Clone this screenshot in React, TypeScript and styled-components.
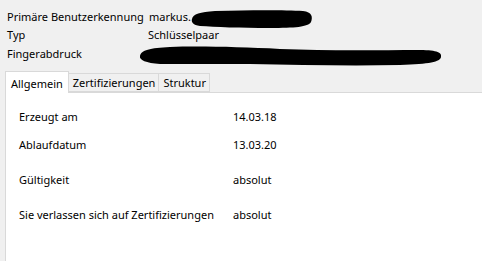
import React from 'react';
import styled, { createGlobalStyle } from 'styled-components';

const GlobalStyle = createGlobalStyle`
  html, body {
    margin: 0;
    padding: 0;
    background: #f0f0f0;
    font-family: 'Noto Sans', 'Open Sans', sans-serif;
    font-size: 11px;
    color: #000;
  }
`;

const Window = styled.div`
  width: 482px;
  height: 261px;
  display: flex;
  flex-direction: column;
  overflow: hidden;
  position: relative;
`;

const Header = styled.div`
  display: grid;
  grid-template-columns: 141px 1fr;
  grid-auto-rows: 18.5px;
  align-items: center;
  padding: 7px 0 0 7px;
`;

const Label = styled.div`
  white-space: nowrap;
`;

const Value = styled.div<{ $shift?: number }>`
  white-space: nowrap;
  padding-left: ${(p) => p.$shift ?? 0}px;
`;

const TabStrip = styled.div`
  display: flex;
  align-items: flex-end;
  margin-top: 8px;
  padding-left: 5px;
  height: 21px;
`;

const Tab = styled.div<{ $active?: boolean }>`
  box-sizing: border-box;
  height: ${(p) => (p.$active ? 22 : 19)}px;
  margin-bottom: ${(p) => (p.$active ? -1 : 0)}px;
  padding: ${(p) => (p.$active ? '2px 5px 0 5px' : '0 3px 0 4px')};
  display: flex;
  align-items: center;
  background: ${(p) => (p.$active ? '#fff' : '#f0f0f0')};
  border: 1px solid #d9d9d9;
  border-bottom: ${(p) => (p.$active ? 'none' : '1px solid #d9d9d9')};
  border-left: ${(p) => (p.$active ? '1px solid #d9d9d9' : 'none')};
  position: relative;
  z-index: ${(p) => (p.$active ? 1 : 0)};
  white-space: nowrap;
`;

const Panel = styled.div`
  flex: 1;
  margin-left: 5px;
  background: #fff;
  border-left: 1px solid #d9d9d9;
  border-top: 1px solid #d9d9d9;
  padding: 16px 0 0 13px;
`;

const Row = styled.div<{ $gap: number }>`
  display: grid;
  grid-template-columns: 214px 1fr;
  margin-top: ${(p) => p.$gap}px;
  line-height: 16px;
`;

const Redaction = styled.svg`
  position: absolute;
  left: 0;
  top: 0;
  pointer-events: none;
`;

const details = [
  { label: 'Erzeugt am', value: '14.03.18', gap: 0 },
  { label: 'Ablaufdatum', value: '13.03.20', gap: 12 },
  { label: 'Gültigkeit', value: 'absolut', gap: 19 },
  { label: 'Sie verlassen sich auf Zertifizierungen', value: 'absolut', gap: 19 },
];

export default function App() {
  return (
    <Window>
      <GlobalStyle />
      <Header>
        <Label>Primäre Benutzerkennung</Label>
        <Value $shift={1}>markus.</Value>
        <Label>Typ</Label>
        <Value>Schlüsselpaar</Value>
        <Label>Fingerabdruck</Label>
        <Value />
      </Header>
      <TabStrip>
        <Tab $active>Allgemein</Tab>
        <Tab>Zertifizierungen</Tab>
        <Tab>Struktur</Tab>
      </TabStrip>
      <Panel>
        {details.map((d) => (
          <Row key={d.label} $gap={d.gap}>
            <div>{d.label}</div>
            <div>{d.value}</div>
          </Row>
        ))}
      </Panel>
      <Redaction width="482" height="80" viewBox="0 0 482 80">
        <path
          d="M192 19 C193 14 200 12 215 11 C250 10 285 10 303 11 C312 12 313 17 311 22 C308 27 295 28 270 28 C240 28 215 27 200 26 C193 25 191 22 192 19 Z"
          fill="#000"
        />
        <path
          d="M140 56 C141 50 150 48 170 47 C200 46 240 47 280 49 C330 51 380 50 420 50 C438 50 442 53 441 57 C440 62 430 64 400 65 C350 66 300 65 250 64 C210 64 180 64 160 64 C146 63 139 60 140 56 Z"
          fill="#000"
        />
      </Redaction>
    </Window>
  );
}
